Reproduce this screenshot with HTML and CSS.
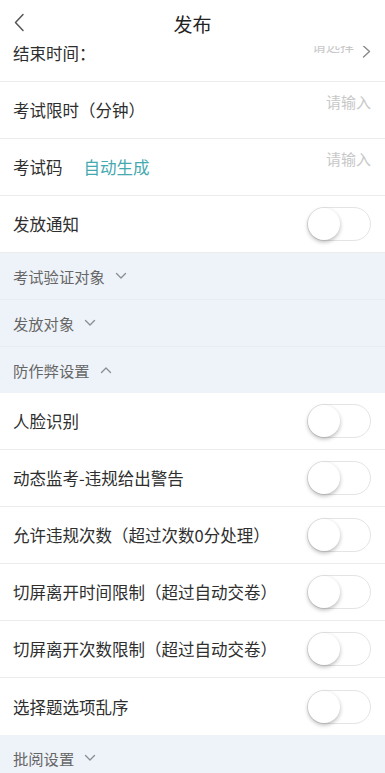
FILE: index.html
```html
<!DOCTYPE html>
<html lang="zh">
<head>
<meta charset="utf-8">
<link rel="stylesheet" href="styles.css">
</head>
<body>
<div class="page">
  <header class="topbar">
    <span class="back">
      <svg width="12" height="19" viewBox="0 0 12 19"><path d="M10 1.5 L2.5 9.5 L10 17.5" fill="none" stroke="#555" stroke-width="1.5" stroke-linecap="round" stroke-linejoin="round"/></svg>
    </span>
    <h1 class="title">发布</h1>
  </header>
  <main class="list">
    <div class="row">
      <span class="label">结束时间：</span>
      <span class="value"><span class="value-text">请选择</span>
        <svg class="arrow" width="9" height="13" viewBox="0 0 9 13"><path d="M1.5 1 L7.5 6.5 L1.5 12" fill="none" stroke="#8a8a8a" stroke-width="1.4" stroke-linecap="round" stroke-linejoin="round"/></svg>
      </span>
    </div>
    <div class="row">
      <span class="label">考试限时（分钟）</span>
      <span class="placeholder">请输入</span>
    </div>
    <div class="row">
      <span class="label">考试码<span class="auto">自动生成</span></span>
      <span class="placeholder">请输入</span>
    </div>
    <div class="row">
      <span class="label">发放通知</span>
      <span class="toggle"><span class="knob"></span></span>
    </div>
    <div class="section">考试验证对象<svg class="chev" width="12" height="8" viewBox="0 0 12 8"><path d="M1.5 1.5 L6 6 L10.5 1.5" fill="none" stroke="#8a8f96" stroke-width="1.4" stroke-linecap="round" stroke-linejoin="round"/></svg></div>
    <div class="section">发放对象<svg class="chev" width="12" height="8" viewBox="0 0 12 8"><path d="M1.5 1.5 L6 6 L10.5 1.5" fill="none" stroke="#8a8f96" stroke-width="1.4" stroke-linecap="round" stroke-linejoin="round"/></svg></div>
    <div class="section last">防作弊设置<svg class="chev" width="12" height="8" viewBox="0 0 12 8"><path d="M1.5 6.5 L6 2 L10.5 6.5" fill="none" stroke="#8a8f96" stroke-width="1.4" stroke-linecap="round" stroke-linejoin="round"/></svg></div>
    <div class="row">
      <span class="label">人脸识别</span>
      <span class="toggle"><span class="knob"></span></span>
    </div>
    <div class="row">
      <span class="label">动态监考-违规给出警告</span>
      <span class="toggle"><span class="knob"></span></span>
    </div>
    <div class="row">
      <span class="label">允许违规次数（超过次数0分处理）</span>
      <span class="toggle"><span class="knob"></span></span>
    </div>
    <div class="row">
      <span class="label">切屏离开时间限制（超过自动交卷）</span>
      <span class="toggle"><span class="knob"></span></span>
    </div>
    <div class="row">
      <span class="label">切屏离开次数限制（超过自动交卷）</span>
      <span class="toggle"><span class="knob"></span></span>
    </div>
    <div class="row noline">
      <span class="label">选择题选项乱序</span>
      <span class="toggle"><span class="knob"></span></span>
    </div>
    <div class="section last">批阅设置<svg class="chev" width="12" height="8" viewBox="0 0 12 8"><path d="M1.5 1.5 L6 6 L10.5 1.5" fill="none" stroke="#8a8f96" stroke-width="1.4" stroke-linecap="round" stroke-linejoin="round"/></svg></div>
  </main>
</div>
</body>
</html>
```
FILE: styles.css
```css
html, body {
  margin: 0;
  padding: 0;
  background: #ffffff;
}
body {
  font-family: "Noto Sans CJK SC", "Noto Sans", sans-serif;
  color: #333;
}
.page {
  width: 385px;
  height: 773px;
  overflow: hidden;
}
.topbar {
  position: relative;
  z-index: 2;
  height: 46px;
  background: #ffffff;
  display: flex;
  align-items: center;
  justify-content: center;
}
.back {
  position: absolute;
  left: 13px;
  top: 13px;
  display: flex;
}
.title {
  margin: 0;
  font-size: 19px;
  font-weight: 400;
  color: #222;
}
.list {
  margin-top: -21px;
  position: relative;
  z-index: 1;
}
.row {
  height: 56px;
  border-bottom: 1px solid #ececec;
  display: flex;
  align-items: center;
  justify-content: space-between;
  padding: 0 14px 0 13px;
  background: #fff;
}
.row.noline {
  border-bottom: none;
  height: 57px;
}
.label {
  font-size: 16.5px;
  color: #2e2e2e;
  white-space: nowrap;
}
.auto {
  color: #45a9b0;
  margin-left: 21px;
}
.placeholder {
  align-self: flex-start;
  margin-top: 10px;
  font-size: 15px;
  line-height: 20px;
  color: #c8c8c8;
}
.value {
  align-self: flex-start;
  margin-top: 20px;
  display: flex;
  align-items: center;
  gap: 8px;
}
.value-text {
  font-size: 14px;
  line-height: 20px;
  color: #c8c8c8;
  margin-top: -14px;
}
.toggle {
  width: 62px;
  height: 32px;
  border: 1px solid #e4e4e4;
  border-radius: 17px;
  background: #fff;
  display: flex;
  align-items: center;
}
.knob {
  width: 32px;
  height: 32px;
  border-radius: 50%;
  background: #fff;
  box-shadow: 0 2px 4px rgba(0, 0, 0, 0.28);
}
.section {
  height: 46px;
  border-bottom: 1px solid #e7ecf2;
  background: #eef3f9;
  display: flex;
  align-items: center;
  padding-left: 13px;
  font-size: 15.3px;
  color: #666;
}
.section.last {
  border-bottom: none;
}
.chev {
  margin-left: 10px;
}
```
